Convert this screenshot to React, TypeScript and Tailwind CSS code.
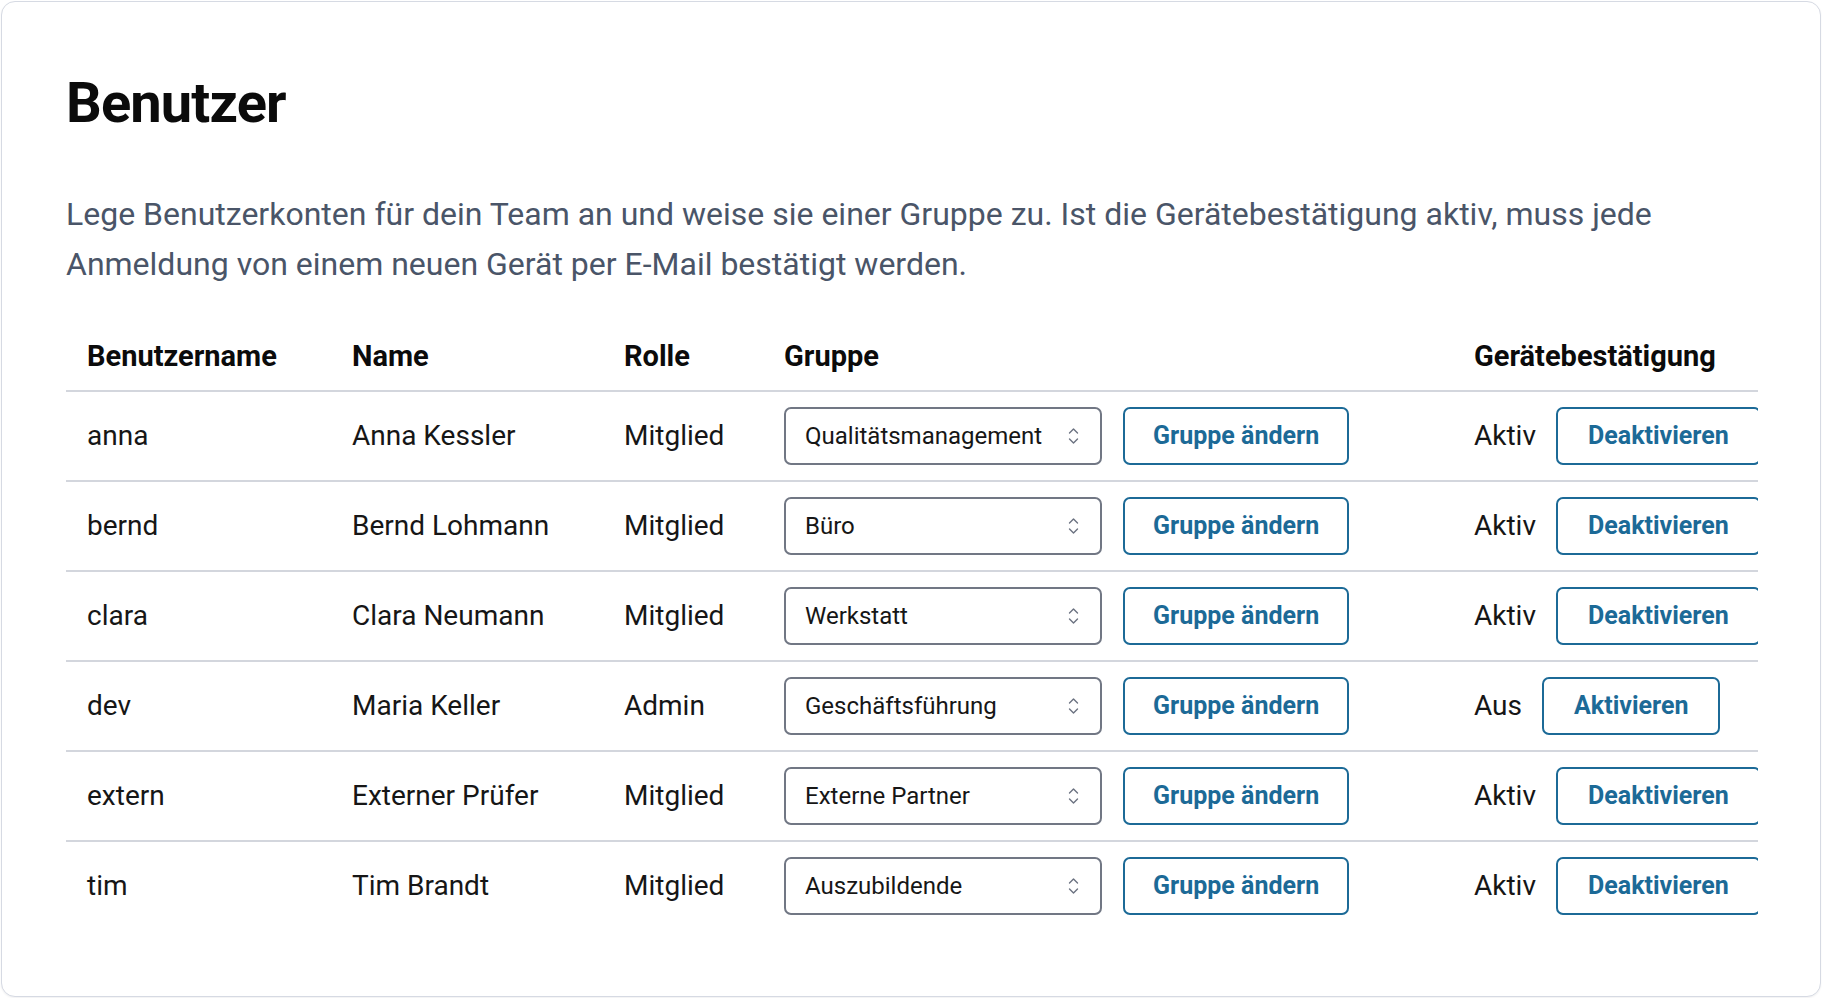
import React from "react";

// Benutzerverwaltung: Kopf mit Erklärung, darunter die Tabelle der Konten mit
// Gruppen-Auswahl und Schalter für die Gerätebestätigung.

type User = {
  username: string;
  name: string;
  role: string;
  group: string;
  confirm: boolean;
};

const users: User[] = [
  { username: "anna", name: "Anna Kessler", role: "Mitglied", group: "Qualitätsmanagement", confirm: true },
  { username: "bernd", name: "Bernd Lohmann", role: "Mitglied", group: "Büro", confirm: true },
  { username: "clara", name: "Clara Neumann", role: "Mitglied", group: "Werkstatt", confirm: true },
  { username: "dev", name: "Maria Keller", role: "Admin", group: "Geschäftsführung", confirm: false },
  { username: "extern", name: "Externer Prüfer", role: "Mitglied", group: "Externe Partner", confirm: true },
  { username: "tim", name: "Tim Brandt", role: "Mitglied", group: "Auszubildende", confirm: true },
];

const groups = [
  "Qualitätsmanagement",
  "Büro",
  "Werkstatt",
  "Geschäftsführung",
  "Externe Partner",
  "Auszubildende",
];

const font = { fontFamily: "Roboto, 'Noto Sans', sans-serif" };

const outlineBtn =
  "inline-flex h-[58px] shrink-0 cursor-pointer items-center justify-center rounded-[7px] border-2 border-[#1c6a97] bg-white text-[25px] font-bold text-[#1c6a97] transition hover:bg-[#1c6a97]/5";

function UpDown() {
  return (
    <svg width="11" height="17" viewBox="0 0 11 17" fill="none" stroke="#6b7280" strokeWidth="1.4" strokeLinecap="round" strokeLinejoin="round">
      <path d="M1.5 5.5 L5.5 1.5 L9.5 5.5" />
      <path d="M1.5 11.5 L5.5 15.5 L9.5 11.5" />
    </svg>
  );
}

function GroupSelect({ value }: { value: string }) {
  return (
    <div className="relative h-[58px] w-[318px] shrink-0">
      <select
        defaultValue={value}
        style={font}
        className="h-full w-full cursor-pointer appearance-none rounded-[7px] border-2 border-[#717784] bg-white pl-[19px] pr-[44px] text-[24px] text-[#161616] outline-none"
      >
        {groups.map((g) => (
          <option key={g} value={g}>
            {g}
          </option>
        ))}
      </select>
      <span className="pointer-events-none absolute right-[23px] top-1/2 flex -translate-y-1/2">
        <UpDown />
      </span>
    </div>
  );
}

export default function App() {
  return (
    <div style={font} className="min-h-screen bg-white p-[1px]">
      <div className="h-[996px] rounded-[14px] border border-[#d6dae3] bg-white px-[64px] pt-[68px] shadow-[0_1px_2px_rgba(20,24,40,0.06)]">
        <h1 className="text-[56px] font-bold leading-[67px] tracking-[-0.015em] text-[#0b0b0b]">Benutzer</h1>
        <p className="mt-[52px] max-w-[1640px] text-[32px] leading-[50px] text-[#4a5568]">
          Lege Benutzerkonten für dein Team an und weise sie einer Gruppe zu. Ist die Gerätebestätigung aktiv, muss jede
          Anmeldung von einem neuen Gerät per E-Mail bestätigt werden.
        </p>

        <div className="mt-[33px] w-[1692px] overflow-hidden">
          <table className="w-[1740px] table-fixed border-collapse text-left text-[28px] text-[#161616]">
            <colgroup>
              <col className="w-[265px]" />
              <col className="w-[272px]" />
              <col className="w-[160px]" />
              <col className="w-[690px]" />
              <col className="w-[353px]" />
            </colgroup>
            <thead>
              <tr className="text-[29px] font-bold text-[#0b0b0b]">
                <th className="px-[21px] py-[17px] font-bold leading-[34px]">Benutzername</th>
                <th className="px-[21px] py-[17px] font-bold leading-[34px]">Name</th>
                <th className="px-[21px] py-[17px] font-bold leading-[34px]">Rolle</th>
                <th className="px-[21px] py-[17px] font-bold leading-[34px]">Gruppe</th>
                <th className="whitespace-nowrap px-[21px] py-[17px] font-bold leading-[34px]">Gerätebestätigung</th>
              </tr>
            </thead>
            <tbody>
              {users.map((u) => (
                <tr key={u.username} className="border-t-2 border-[#d3d6dd]">
                  <td className="px-[21px] py-[15px] leading-[34px]">{u.username}</td>
                  <td className="whitespace-nowrap px-[21px] py-[15px] leading-[34px]">{u.name}</td>
                  <td className="px-[21px] py-[15px] leading-[34px]">{u.role}</td>
                  <td className="px-[21px] py-[15px]">
                    <div className="flex items-center gap-[21px]">
                      <GroupSelect value={u.group} />
                      <button type="button" style={font} className={`${outlineBtn} px-[28px]`}>
                        Gruppe ändern
                      </button>
                    </div>
                  </td>
                  <td className="px-[21px] py-[15px]">
                    <div className="flex items-center gap-[20px] whitespace-nowrap">
                      <span className="leading-[34px]">{u.confirm ? "Aktiv" : "Aus"}</span>
                      <button type="button" style={font} className={`${outlineBtn} px-[30px]`}>
                        {u.confirm ? "Deaktivieren" : "Aktivieren"}
                      </button>
                    </div>
                  </td>
                </tr>
              ))}
            </tbody>
          </table>
        </div>
      </div>
    </div>
  );
}
